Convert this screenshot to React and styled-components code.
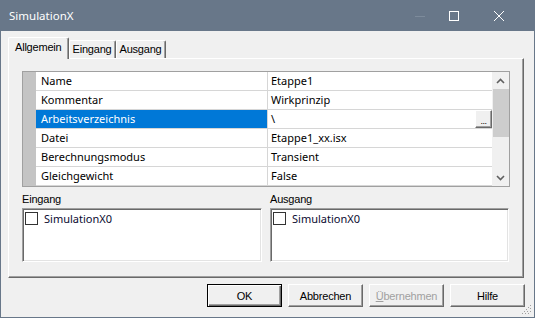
import React from 'react'
import styled, { createGlobalStyle } from 'styled-components'

const GlobalStyle = createGlobalStyle`
  html, body {
    margin: 0;
    padding: 0;
    background: #f0f0f0;
  }
  body {
    width: 535px;
    height: 318px;
    overflow: hidden;
  }
`

const Window = styled.div`
  width: 535px;
  height: 318px;
  display: flex;
  flex-direction: column;
  position: relative;
  background: #f0f0f0;
  font-family: "Liberation Sans", Arial, sans-serif;
  font-size: 11px;
  color: #000;
`

const TitleBar = styled.div`
  height: 31px;
  flex: none;
  display: flex;
  align-items: center;
  padding-left: 9px;
  background: #687789;
  color: #fff;
  font-family: "Noto Sans", sans-serif;
  font-size: 11.5px;
`

const Caption = styled.div`
  flex: 1;
`

const Controls = styled.div`
  display: flex;
  align-items: center;
  padding-right: 31px;
`

const CtlIcon = styled.svg`
  width: 10px;
  height: 10px;
  margin-right: ${p => p.$gap || 0}px;
  stroke: ${p => (p.$faint ? '#7d8b9b' : '#fff')};
  fill: none;
  stroke-width: 1;
`

const Client = styled.div`
  flex: 1;
  display: flex;
  flex-direction: column;
  border: 1px solid #687789;
  border-top: none;
  padding: 6px 9px 0 7px;
`

const TabStrip = styled.div`
  height: 21px;
  display: flex;
  align-items: flex-end;
  position: relative;
  z-index: 1;
`

const Tab = styled.div`
  box-sizing: border-box;
  height: ${p => (p.$active ? 22 : 18)}px;
  margin-bottom: ${p => (p.$active ? -1 : 0)}px;
  padding: ${p => (p.$active ? '3px 6px 0' : '2px 3px 0')};
  background: #f0f0f0;
  border-top: 1px solid #fff;
  border-left: 1px solid #fff;
  border-right: 1px solid #696969;
  box-shadow: inset -1px 0 0 #a0a0a0;
  border-radius: 2px 2px 0 0;
  white-space: nowrap;
  letter-spacing: -0.2px;
`

const Panel = styled.div`
  box-sizing: border-box;
  width: 516px;
  height: 220px;
  display: flex;
  flex-direction: column;
  padding: 12px 13px 0 13px;
  border-top: 1px solid #fff;
  border-left: 1px solid #fff;
  border-right: 1px solid #696969;
  border-bottom: 1px solid #696969;
  box-shadow: inset -1px -1px 0 #a0a0a0;
`

const Grid = styled.div`
  height: 116px;
  box-sizing: border-box;
  display: flex;
  border: 1px solid #a0a0a0;
  background: #fff;
  font-family: "Noto Sans", sans-serif;
  font-size: 11px;
`

const Rows = styled.div`
  flex: 1;
  display: flex;
  flex-direction: column;
`

const Row = styled.div`
  height: 19px;
  display: grid;
  grid-template-columns: 13px 232px 1fr;
`

const Gutter = styled.div`
  background: #c4c4c4;
`

const NameCell = styled.div`
  box-sizing: border-box;
  padding-left: 5px;
  line-height: 18px;
  border-bottom: 1px solid #d6d6d6;
  border-right: 1px solid #d6d6d6;
  background: ${p => (p.$selected ? '#0078d7' : '#fff')};
  color: ${p => (p.$selected ? '#fff' : '#000')};
  white-space: nowrap;
`

const ValueCell = styled.div`
  box-sizing: border-box;
  display: flex;
  align-items: center;
  padding-left: 3px;
  line-height: 18px;
  border-bottom: 1px solid #d6d6d6;
  white-space: nowrap;
`

const ValueText = styled.span`
  flex: 1;
`

const EllipsisButton = styled.div`
  box-sizing: border-box;
  width: 17px;
  height: 18px;
  display: flex;
  align-items: flex-end;
  justify-content: center;
  padding-bottom: 3px;
  background: #f0f0f0;
  border-top: 1px solid #fff;
  border-left: 1px solid #fff;
  border-right: 1px solid #696969;
  border-bottom: 1px solid #696969;
  box-shadow: inset -1px -1px 0 #a0a0a0;
  font-family: "Liberation Sans", Arial, sans-serif;
  font-size: 9px;
  line-height: 6px;
  letter-spacing: -0.5px;
`

const ScrollBar = styled.div`
  width: 17px;
  display: flex;
  flex-direction: column;
  background: #f0f0f0;
`

const ScrollArrow = styled.div`
  height: 17px;
  display: flex;
  align-items: center;
  justify-content: center;
`

const Thumb = styled.div`
  height: 48px;
  margin: 0 0 0 1px;
  background: #cdcdcd;
`

const Track = styled.div`
  flex: 1;
`

const Chevron = styled.svg`
  width: 9px;
  height: 6px;
  fill: none;
  stroke: #606060;
  stroke-width: 1.6;
`

const Lists = styled.div`
  display: grid;
  grid-template-columns: 240px 239px;
  column-gap: 8px;
  margin-top: 6px;
`

const ListGroup = styled.div`
  display: flex;
  flex-direction: column;
  gap: 2px;
`

const GroupLabel = styled.div`
  height: 13px;
  line-height: 13px;
  letter-spacing: -0.2px;
`

const ListBox = styled.div`
  box-sizing: border-box;
  height: 54px;
  padding: 1px 2px;
  background: #fff;
  border-top: 1px solid #a0a0a0;
  border-left: 1px solid #a0a0a0;
  border-right: 1px solid #fff;
  border-bottom: 1px solid #fff;
  box-shadow: inset 1px 1px 0 #696969, inset -1px -1px 0 #e3e3e3;
`

const ListItem = styled.div`
  height: 16px;
  display: flex;
  align-items: center;
  gap: 6px;
  font-family: "Noto Sans", sans-serif;
  font-size: 11px;
  color: #0a0a30;
`

const CheckBox = styled.span`
  box-sizing: border-box;
  width: 13px;
  height: 13px;
  border: 1px solid #333;
  background: #fff;
`

const ButtonRow = styled.div`
  display: flex;
  justify-content: flex-end;
  gap: 6px;
  margin-top: 6px;
`

const Button = styled.div`
  box-sizing: border-box;
  width: 75px;
  height: 23px;
  display: flex;
  align-items: center;
  justify-content: center;
  background: #f0f0f0;
  letter-spacing: -0.2px;
  color: ${p => (p.$disabled ? '#a0a0a0' : '#000')};
  border-top: 1px solid ${p => (p.$default ? '#000' : '#fff')};
  border-left: 1px solid ${p => (p.$default ? '#000' : '#fff')};
  border-right: 1px solid ${p => (p.$default ? '#000' : '#696969')};
  border-bottom: 1px solid ${p => (p.$default ? '#000' : '#696969')};
  box-shadow: ${p =>
    p.$default
      ? 'inset 1px 1px 0 #fff, inset -1px -1px 0 #696969, inset -2px -2px 0 #a0a0a0'
      : 'inset -1px -1px 0 #a0a0a0'};
`

const Mnemonic = styled.span`
  text-decoration: underline;
`

const Grip = styled.svg`
  position: absolute;
  right: 2px;
  bottom: 2px;
  width: 12px;
  height: 12px;
`

const props = [
  ['Name', 'Etappe1'],
  ['Kommentar', 'Wirkprinzip'],
  ['Arbeitsverzeichnis', '\\', true],
  ['Datei', 'Etappe1_xx.isx'],
  ['Berechnungsmodus', 'Transient'],
  ['Gleichgewicht', 'False'],
]

const gripDots = [
  [10, 2], [8, 4], [6, 6], [4, 8], [2, 10],
  [10, 5], [7, 8], [5, 10],
  [10, 8], [8, 10],
]

export default function App() {
  return (
    <>
      <GlobalStyle />
      <Window>
        <TitleBar>
          <Caption>SimulationX</Caption>
          <Controls>
            <CtlIcon $gap={24} $faint viewBox="0 0 10 10">
              <line x1="0" y1="5.5" x2="10" y2="5.5" />
            </CtlIcon>
            <CtlIcon $gap={35} viewBox="0 0 10 10">
              <rect x="0.5" y="0.5" width="9" height="9" />
            </CtlIcon>
            <CtlIcon viewBox="0 0 10 10">
              <line x1="0" y1="0" x2="10" y2="10" />
              <line x1="10" y1="0" x2="0" y2="10" />
            </CtlIcon>
          </Controls>
        </TitleBar>
        <Client>
          <TabStrip>
            <Tab $active>Allgemein</Tab>
            <Tab>Eingang</Tab>
            <Tab>Ausgang</Tab>
          </TabStrip>
          <Panel>
            <Grid>
              <Rows>
                {props.map(([name, value, selected]) => (
                  <Row key={name}>
                    <Gutter />
                    <NameCell $selected={selected}>{name}</NameCell>
                    <ValueCell>
                      <ValueText>{value}</ValueText>
                      {selected && <EllipsisButton>...</EllipsisButton>}
                    </ValueCell>
                  </Row>
                ))}
              </Rows>
              <ScrollBar>
                <ScrollArrow>
                  <Chevron viewBox="0 0 9 6">
                    <polyline points="1,5 4.5,1.5 8,5" />
                  </Chevron>
                </ScrollArrow>
                <Thumb />
                <Track />
                <ScrollArrow>
                  <Chevron viewBox="0 0 9 6">
                    <polyline points="1,1 4.5,4.5 8,1" />
                  </Chevron>
                </ScrollArrow>
              </ScrollBar>
            </Grid>
            <Lists>
              <ListGroup>
                <GroupLabel>Eingang</GroupLabel>
                <ListBox>
                  <ListItem>
                    <CheckBox />
                    SimulationX0
                  </ListItem>
                </ListBox>
              </ListGroup>
              <ListGroup>
                <GroupLabel>Ausgang</GroupLabel>
                <ListBox>
                  <ListItem>
                    <CheckBox />
                    SimulationX0
                  </ListItem>
                </ListBox>
              </ListGroup>
            </Lists>
          </Panel>
          <ButtonRow>
            <Button $default>OK</Button>
            <Button>Abbrechen</Button>
            <Button $disabled>
              <Mnemonic>Ü</Mnemonic>bernehmen
            </Button>
            <Button>Hilfe</Button>
          </ButtonRow>
        </Client>
        <Grip viewBox="0 0 12 12">
          {gripDots.map(([x, y]) => (
            <rect key={`${x}-${y}`} x={x - 1} y={y - 1} width="1" height="1" fill="#a0a0a0" />
          ))}
        </Grip>
      </Window>
    </>
  )
}
